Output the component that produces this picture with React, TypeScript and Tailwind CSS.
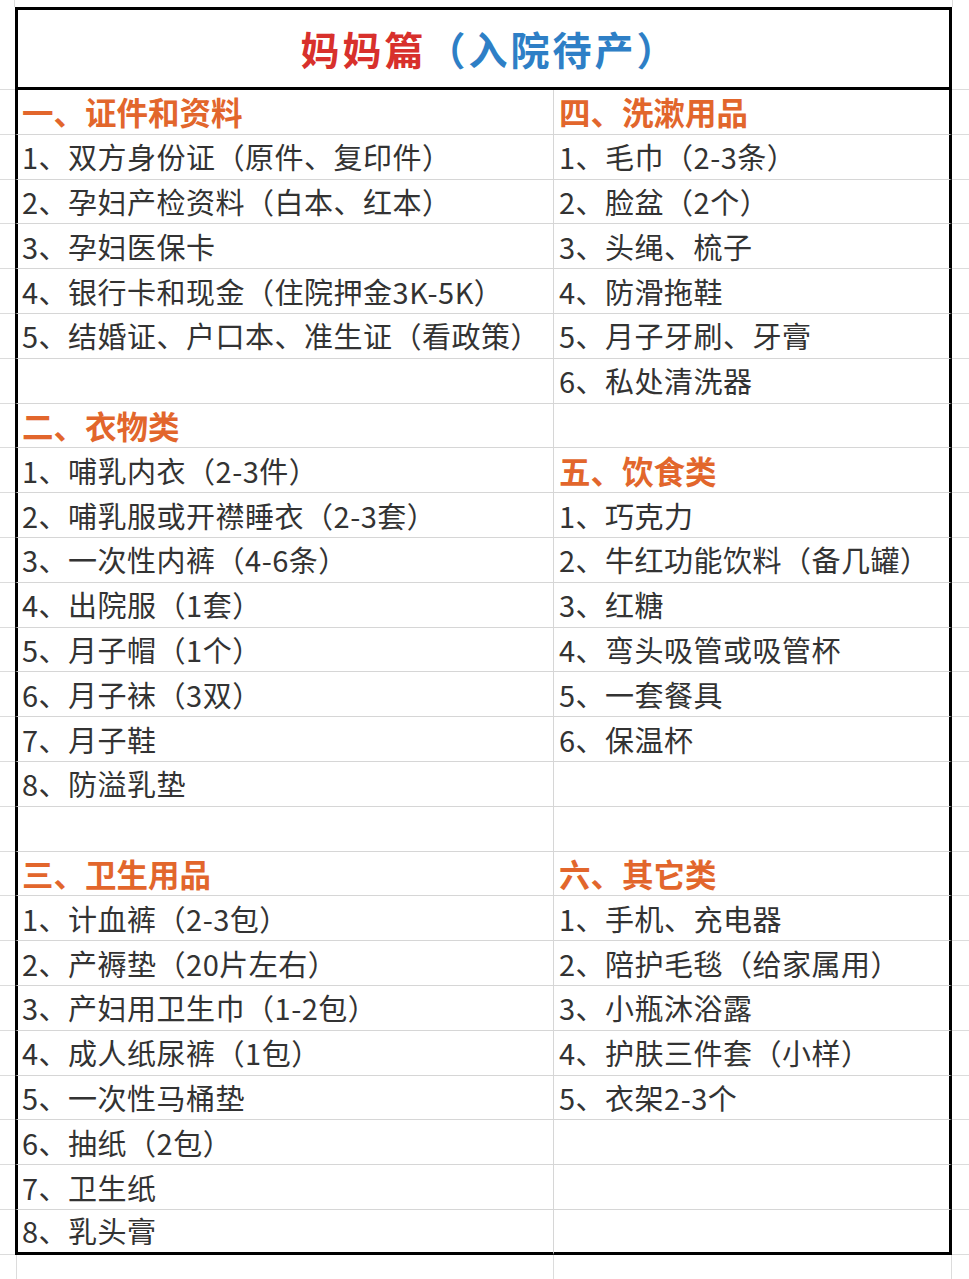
type Cell = { text: string; head?: boolean } | null;

const LEFT: Cell[] = [
  { text: '一、证件和资料', head: true },
  { text: '1、双方身份证（原件、复印件）' },
  { text: '2、孕妇产检资料（白本、红本）' },
  { text: '3、孕妇医保卡' },
  { text: '4、银行卡和现金（住院押金3K-5K）' },
  { text: '5、结婚证、户口本、准生证（看政策）' },
  null,
  { text: '二、衣物类', head: true },
  { text: '1、哺乳内衣（2-3件）' },
  { text: '2、哺乳服或开襟睡衣（2-3套）' },
  { text: '3、一次性内裤（4-6条）' },
  { text: '4、出院服（1套）' },
  { text: '5、月子帽（1个）' },
  { text: '6、月子袜（3双）' },
  { text: '7、月子鞋' },
  { text: '8、防溢乳垫' },
  null,
  { text: '三、卫生用品', head: true },
  { text: '1、计血裤（2-3包）' },
  { text: '2、产褥垫（20片左右）' },
  { text: '3、产妇用卫生巾（1-2包）' },
  { text: '4、成人纸尿裤（1包）' },
  { text: '5、一次性马桶垫' },
  { text: '6、抽纸（2包）' },
  { text: '7、卫生纸' },
  { text: '8、乳头膏' },
];

const RIGHT: Cell[] = [
  { text: '四、洗漱用品', head: true },
  { text: '1、毛巾（2-3条）' },
  { text: '2、脸盆（2个）' },
  { text: '3、头绳、梳子' },
  { text: '4、防滑拖鞋' },
  { text: '5、月子牙刷、牙膏' },
  { text: '6、私处清洗器' },
  null,
  { text: '五、饮食类', head: true },
  { text: '1、巧克力' },
  { text: '2、牛红功能饮料（备几罐）' },
  { text: '3、红糖' },
  { text: '4、弯头吸管或吸管杯' },
  { text: '5、一套餐具' },
  { text: '6、保温杯' },
  null,
  null,
  { text: '六、其它类', head: true },
  { text: '1、手机、充电器' },
  { text: '2、陪护毛毯（给家属用）' },
  { text: '3、小瓶沐浴露' },
  { text: '4、护肤三件套（小样）' },
  { text: '5、衣架2-3个' },
  null,
  null,
  null,
];

function CellText({ cell }: { cell: Cell }) {
  if (!cell) return null;
  if (cell.head) {
    return <span className="whitespace-nowrap text-[31.5px] font-bold leading-none text-[#e2662c]">{cell.text}</span>;
  }
  return <span className="whitespace-nowrap text-[29px] leading-none tracking-[0.5px] text-[#333333]">{cell.text}</span>;
}

export default function App() {
  return (
    <div className="h-[1279px] w-[969px] overflow-hidden bg-white font-['Noto_Sans_CJK_SC',sans-serif]">
      {/* strip above the box */}
      <div className="flex h-[7px]">
        <div className="w-[15px] border-r border-[#dcdcdc]" />
        <div className="w-[937px]" />
        <div className="flex-1 border-l border-[#dcdcdc]" />
      </div>

      {/* title */}
      <div className="flex h-[83px]">
        <div className="w-[15px] border-b border-[#dcdcdc]" />
        <div className="flex w-[937px] items-center justify-center border-[3px] border-black pl-[12px]">
          <span className="text-[39px] font-bold leading-none tracking-[3px]">
            <span className="text-[#d8302c]">妈妈篇</span>
            <span className="text-[#2e7fc6]">（入院待产）</span>
          </span>
        </div>
        <div className="flex-1 border-b border-[#dcdcdc]" />
      </div>

      {/* rows */}
      {LEFT.map((l, i) => {
        const last = i === LEFT.length - 1;
        return (
          <div key={i} className="flex h-[44.8px]">
            <div className="w-[15px] border-b border-[#dcdcdc]" />
            <div
              className={`flex w-[539px] items-center border-l-[3px] border-r border-l-black border-r-[#d6d6d6] pl-[4px] ${
                last ? 'border-b-[3px] border-b-black' : 'border-b border-b-[#d6d6d6]'
              }`}
            >
              <CellText cell={l} />
            </div>
            <div
              className={`flex w-[398px] items-center border-r-[3px] border-r-black pl-[5px] ${
                last ? 'border-b-[3px] border-b-black' : 'border-b border-b-[#d6d6d6]'
              }`}
            >
              <CellText cell={RIGHT[i]} />
            </div>
            <div className="flex-1 border-b border-[#dcdcdc]" />
          </div>
        );
      })}

      {/* strip below the box */}
      <div className="flex h-[30px]">
        <div className="w-[17px] border-r border-[#dcdcdc]" />
        <div className="w-[537px] border-r border-[#dcdcdc]" />
        <div className="w-[398px] border-r border-[#dcdcdc]" />
        <div className="flex-1" />
      </div>
    </div>
  );
}
